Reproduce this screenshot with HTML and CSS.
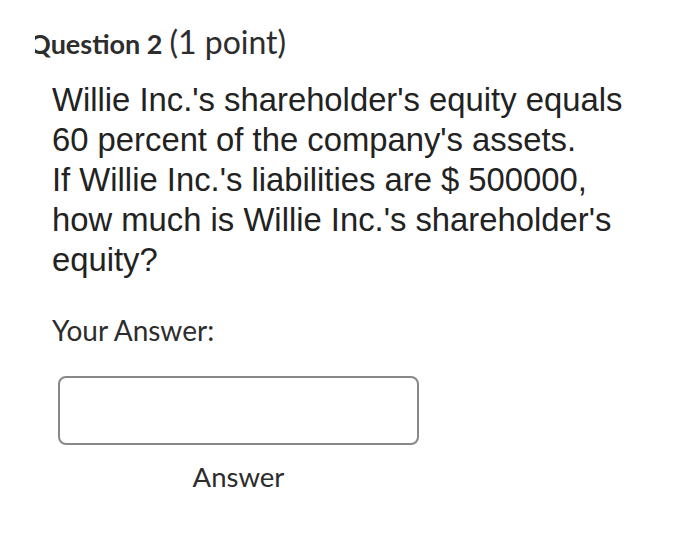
FILE: index.html
```html
<!DOCTYPE html>
<html lang="en">
<head>
    <meta charset="UTF-8">
    <title>Question 2</title>
    <link rel="stylesheet" href="styles.css">
</head>
<body>
    <div class="question">
        <div class="title-clip">
            <h2 class="title"><strong>Question 2</strong> <span class="points">(1 point)</span></h2>
        </div>
        <div class="prompt">
            Willie Inc.'s shareholder's equity equals<br>
            60 percent of the company's assets.<br>
            If Willie Inc.'s liabilities are $ 500000,<br>
            how much is Willie Inc.'s shareholder's<br>
            equity?
        </div>
        <div class="answer-label">Your Answer:</div>
        <div class="answer-box">
            <input class="answer-input" type="text" aria-label="Answer">
            <div class="answer-caption">Answer</div>
        </div>
    </div>
</body>
</html>
```

FILE: styles.css
```css
body {
    margin: 0;
    background: #fff;
    color: #222;
    font-family: 'Lato', sans-serif;
}
.question {
    padding: 20px 0 0 35px;
}
.title-clip {
    overflow: hidden;
}
.title {
    margin: 0 0 0 -6px;
    font-size: 27px;
    font-weight: normal;
    line-height: 44px;
    color: #2d2d2d;
}
.title strong {
    font-weight: bold;
}
.points {
    font-size: 32px;
}
.prompt {
    margin: 14px 0 0 17px;
    font-family: 'Liberation Sans', Arial, sans-serif;
    font-size: 32.8px;
    line-height: 40px;
    color: #222;
}
.answer-label {
    margin: 33px 0 0 17px;
    font-size: 28px;
    line-height: 34px;
    color: #2d2d2d;
}
.answer-box {
    width: 361px;
    margin: 29px 0 0 23px;
}
.answer-input {
    display: block;
    box-sizing: border-box;
    width: 100%;
    height: 69px;
    border: 2px solid #888;
    border-radius: 8px;
    background: #fff;
    outline: none;
}
.answer-caption {
    margin-top: 16px;
    text-align: center;
    font-size: 27.5px;
    line-height: 32px;
    color: #2d2d2d;
}
```
